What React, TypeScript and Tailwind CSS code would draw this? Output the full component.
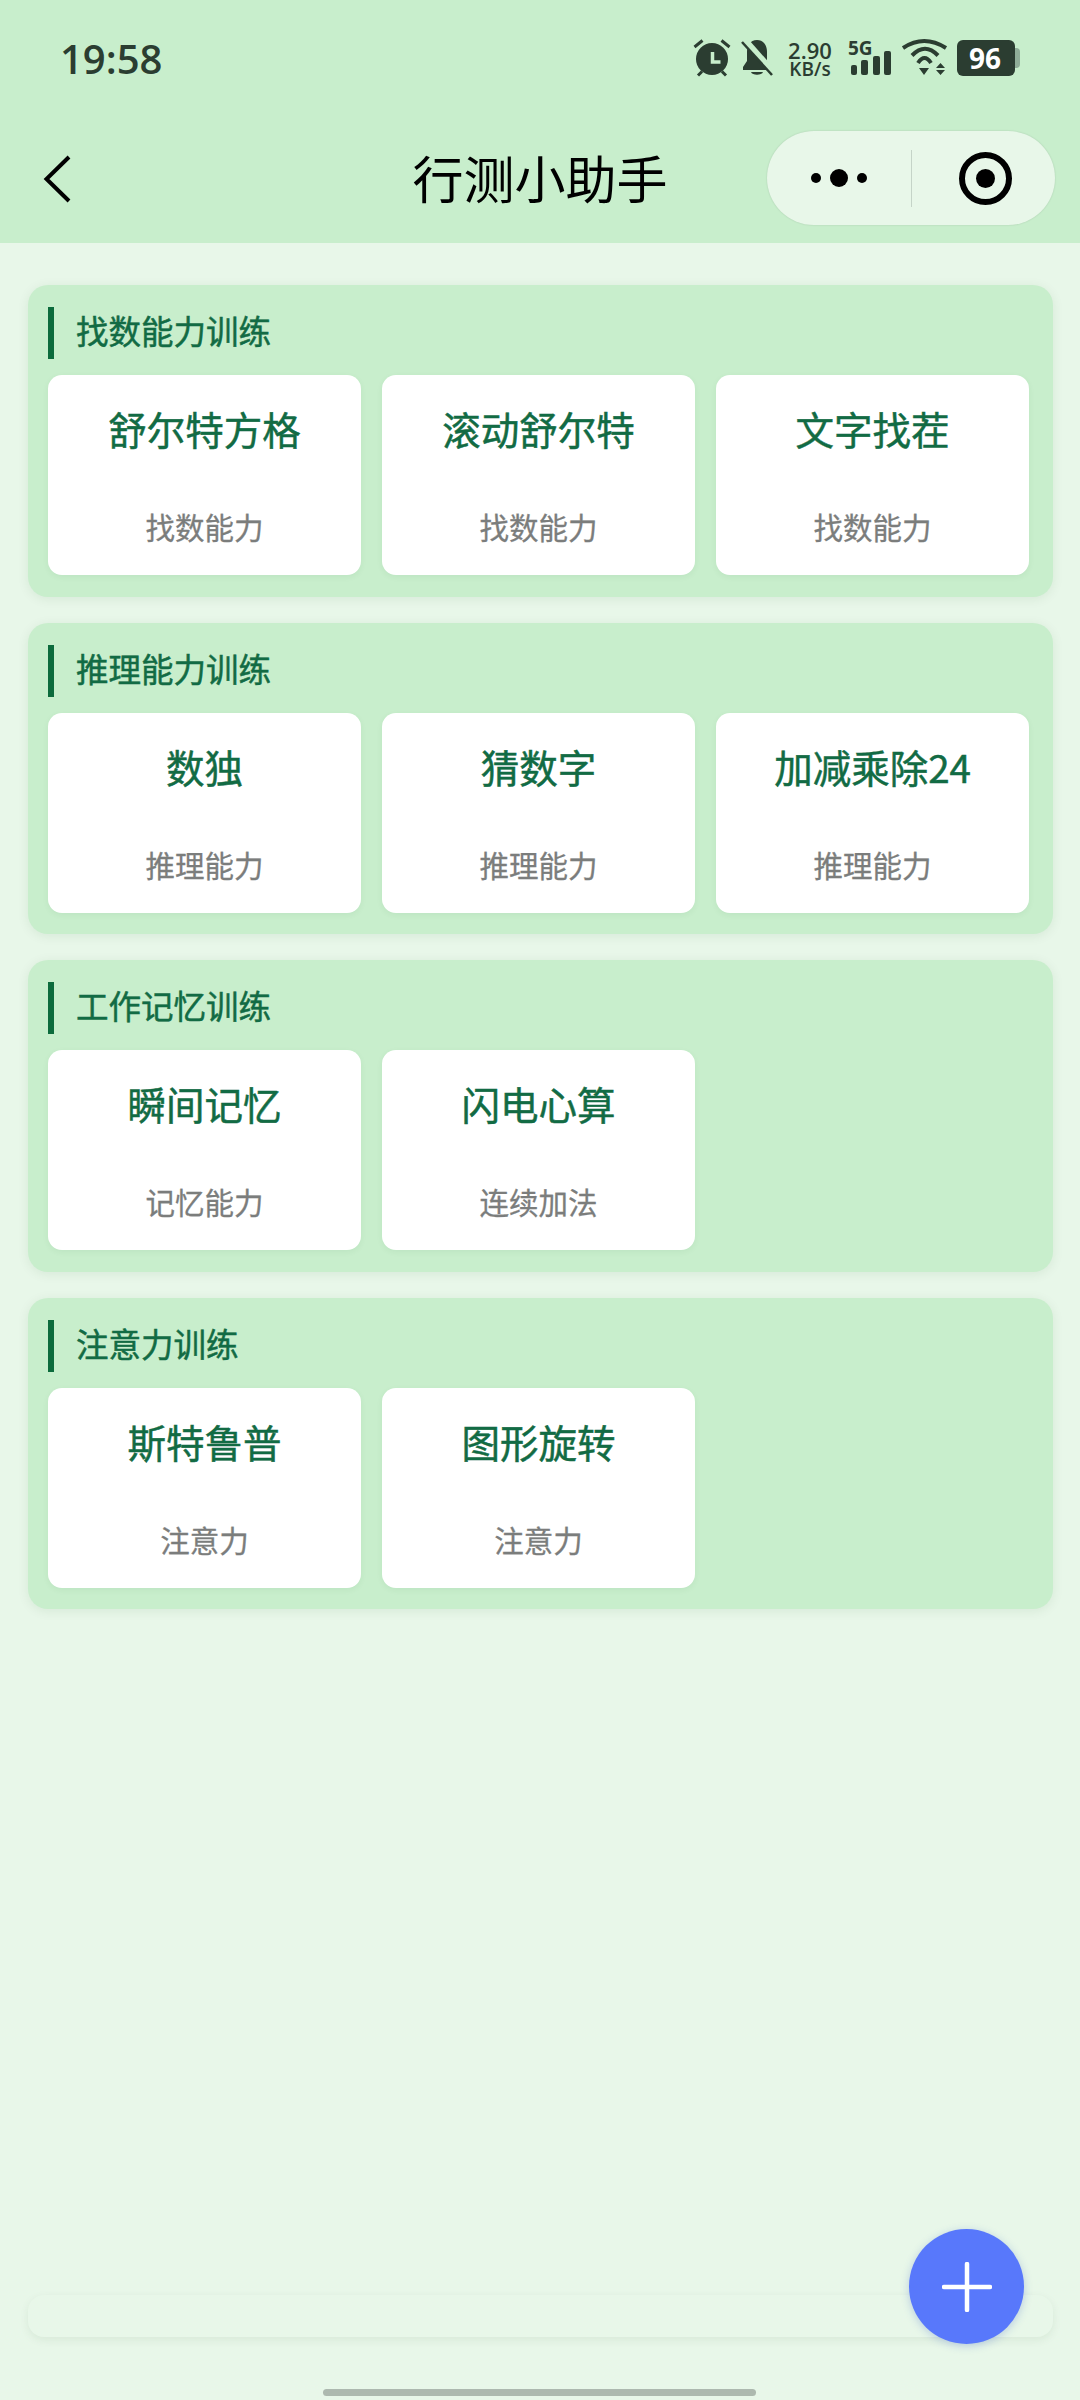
const sections = [
  {
    title: '找数能力训练',
    items: [
      { name: '舒尔特方格', tag: '找数能力' },
      { name: '滚动舒尔特', tag: '找数能力' },
      { name: '文字找茬', tag: '找数能力' },
    ],
  },
  {
    title: '推理能力训练',
    items: [
      { name: '数独', tag: '推理能力' },
      { name: '猜数字', tag: '推理能力' },
      { name: '加减乘除24', tag: '推理能力' },
    ],
  },
  {
    title: '工作记忆训练',
    items: [
      { name: '瞬间记忆', tag: '记忆能力' },
      { name: '闪电心算', tag: '连续加法' },
    ],
  },
  {
    title: '注意力训练',
    items: [
      { name: '斯特鲁普', tag: '注意力' },
      { name: '图形旋转', tag: '注意力' },
    ],
  },
];

function StatusIcons() {
  return (
    <div className="flex items-start text-[#2b3d31]">
      {/* alarm */}
      <svg width="38" height="40" viewBox="0 0 38 40">
        <circle cx="19" cy="21" r="16" fill="#2b3d31" />
        <path d="M1.500 9l8-6.500M36.500 9l-8-6.500M5 37.500l4-4M33 37.500l-4-4" stroke="#2b3d31" strokeWidth="3" fill="none" />
        <path d="M19.500 14v10h8" stroke="#c8eecc" strokeWidth="3.500" fill="none" />
      </svg>
      {/* bell off */}
      <svg width="32" height="40" viewBox="0 0 32 40" className="ml-[10px]">
        <path d="M16 2c7 0 10 6 10 12v9l4 6v3H2v-3l4-6v-9C6 8 9 2 16 2z" fill="#2b3d31" />
        <path d="M10 34h12c-1 3.500-11 3.500-12 0z" fill="#2b3d31" />
        <path d="M2 0l30 34" stroke="#c8eecc" strokeWidth="6.500" fill="none" />
        <path d="M1 4l30 33" stroke="#2b3d31" strokeWidth="2.500" fill="none" />
      </svg>
      <div className="ml-[14px] w-[46px] flex flex-col items-center font-['Open_Sans',sans-serif] font-semibold">
        <span className="text-[22px] leading-[22px] mt-[1px]">2.90</span>
        <span className="text-[19px] leading-[19px] -mt-[1px]">KB/s</span>
      </div>
      {/* 5G signal */}
      <div className="relative ml-[15px] w-[44px] h-[38px]">
        <span className="absolute left-0 top-0 text-[19px] leading-[20px] font-bold font-['Open_Sans',sans-serif]">5G</span>
        <svg width="44" height="38" viewBox="0 0 44 38" className="absolute left-0 top-0">
          <rect x="3" y="27" width="6" height="10" rx="2" fill="#2b3d31" />
          <rect x="13" y="22" width="7" height="15" rx="2" fill="#2b3d31" />
          <rect x="25" y="18" width="7" height="19" rx="2" fill="#2b3d31" />
          <rect x="36" y="13" width="7" height="24" rx="2" fill="#2b3d31" />
        </svg>
      </div>
      {/* wifi */}
      <svg width="46" height="38" viewBox="0 0 46 38" className="ml-[10px]">
        <path d="M1 10Q22-4 44 10M10 17.500Q23 4 36 17.500M16 25Q22.500 15 29 25" stroke="#2b3d31" strokeWidth="4" fill="none" />
        <path d="M17 30h10l-5 7zM34 30l4.500-5 4.500 5zM34 32l4.500 5 4.500-5z" fill="#2b3d31" />
      </svg>
      {/* battery */}
      <div className="ml-[9px] flex items-center mt-[2px]">
        <div className="w-[58px] h-[36px] rounded-[6px] bg-[#2b3d31] flex items-center justify-center pr-[2px] text-white text-[28px] font-bold font-['Open_Sans',sans-serif] leading-none">
          96
        </div>
        <div className="w-[5px] h-[20px] rounded-r-[4px] bg-[#8fad98]" />
      </div>
    </div>
  );
}

function GameCard({ name, tag }: { name: string; tag: string }) {
  return (
    <div className="h-[200px] rounded-[14px] bg-white shadow-[0_2px_6px_rgba(0,80,30,0.06)] flex flex-col items-center pt-[29px]">
      <p className="text-[38.500px] leading-[48px] font-normal text-[#126b44] [-webkit-text-stroke:0.5px_#126b44]">{name}</p>
      <p className="mt-[54px] text-[29.500px] leading-[40px] text-[#7b7d7c] [-webkit-text-stroke:0.3px_#7b7d7c]">{tag}</p>
    </div>
  );
}

export default function App() {
  return (
    <div className="relative h-[2400px] w-[1080px] overflow-hidden bg-[#e8f7e9] font-['Noto_Sans_CJK_SC','Noto_Sans',sans-serif]">
      <header className="h-[243px] bg-[#c8eecc]">
        <div className="h-[118px] flex items-start justify-between pl-[60px] pr-[60px] pt-[38px]">
          <span className="text-[40px] leading-[42px] font-semibold text-[#2b3d31] font-['Open_Sans',sans-serif]">19:58</span>
          <StatusIcons />
        </div>
        <div className="relative h-[125px] flex items-start justify-center">
          <span className="mt-[27px] text-[51px] leading-[64px] text-black">行测小助手</span>
          <svg width="30" height="50" viewBox="0 0 30 50" className="absolute left-[43px] top-[37px]">
            <path d="M26 2L3.500 24 26 46" stroke="black" strokeWidth="4" fill="none" />
          </svg>
          <div className="absolute left-[767px] top-[13px] w-[288px] h-[94px] rounded-full bg-[#e8f7e9] shadow-[0_0_2px_rgba(0,0,0,0.15)] flex items-center">
            <div className="w-[144px] flex items-center justify-center gap-[9px]">
              <span className="w-[10px] h-[10px] rounded-full bg-black" />
              <span className="w-[18px] h-[18px] rounded-full bg-black" />
              <span className="w-[10px] h-[10px] rounded-full bg-black" />
            </div>
            <div className="w-[1px] h-[57px] bg-[#c5d4c8]" />
            <div className="flex-1 flex items-center justify-center pl-[3px]">
              <span className="w-[53px] h-[53px] rounded-full border-[6px] border-black flex items-center justify-center">
                <span className="w-[19px] h-[19px] rounded-full bg-black" />
              </span>
            </div>
          </div>
        </div>
      </header>

      <main className="flex flex-col gap-[26px] pl-[28px] pr-[27px] pt-[42px]">
        {sections.map((s) => (
          <section key={s.title} className="h-[311.500px] rounded-[20px] bg-[#c8eecc] shadow-[0_2px_12px_rgba(0,60,20,0.08)] pl-[20px] pr-[24px] pt-[22px]">
            <div className="h-[52px] flex items-center border-l-[6px] border-[#0c6b3c] pl-[22px]">
              <h2 className="mb-[6px] text-[32.500px] leading-[40px] font-normal text-[#126b44] [-webkit-text-stroke:0.5px_#126b44]">{s.title}</h2>
            </div>
            <div className="mt-[16px] grid grid-cols-3 gap-[21px]">
              {s.items.map((it) => (
                <GameCard key={it.name} name={it.name} tag={it.tag} />
              ))}
            </div>
          </section>
        ))}
      </main>

      {/* bottom strip under the fab */}
      <div className="absolute left-[28px] top-[2295px] w-[1025px] h-[42px] rounded-[16px] bg-[#e8f7e9] shadow-[0_3px_10px_rgba(0,60,20,0.07)]" />

      <button className="absolute left-[909px] top-[2229px] w-[115px] h-[115px] rounded-full bg-[#5878fb] shadow-[0_2px_8px_rgba(40,80,200,0.25)] flex items-center justify-center">
        <svg width="50" height="50" viewBox="0 0 50 50">
          <path d="M25 2v46M2 25h46" stroke="white" strokeWidth="4.500" strokeLinecap="round" fill="none" />
        </svg>
      </button>

      <div className="absolute left-[323px] top-[2389px] w-[433px] h-[7px] rounded-full bg-[#adb9af]" />
    </div>
  );
}
